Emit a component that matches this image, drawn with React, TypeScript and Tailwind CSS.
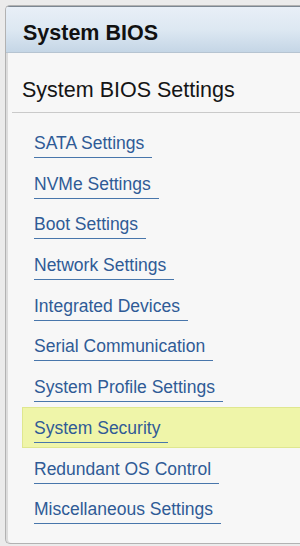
const items = [
  "SATA Settings",
  "NVMe Settings",
  "Boot Settings",
  "Network Settings",
  "Integrated Devices",
  "Serial Communication",
  "System Profile Settings",
  "System Security",
  "Redundant OS Control",
  "Miscellaneous Settings",
];

const App = () => {
  return (
    <div
      className="w-[300px] h-[546px] bg-[#ebebeb] pt-[5px] pl-[5px] pb-[2px] overflow-hidden"
      style={{ fontFamily: '"Liberation Sans", Arial, sans-serif' }}
    >
      <div className="h-full flex flex-col bg-[#f7f7f7] border border-r-0 border-[#b2b2b2] rounded-l-[5px] overflow-hidden shadow-[inset_2px_0_0_#dcdcdc]">
        {/* Header */}
        <div className="h-[47px] shrink-0 border-t border-t-[#7c8792] border-b border-b-[#b6c4d1] bg-gradient-to-b from-[#e8eff7] via-[#dde8f2] to-[#c5d6e6] pl-[17px] pt-[13px]">
          <h1 className="text-[21.5px] leading-[26px] font-bold text-[#111]">System BIOS</h1>
        </div>

        {/* Body */}
        <div className="flex-1">
          <h2 className="pl-[16px] pt-[24px] text-[21.5px] leading-[26px] text-[#151515]">
            System BIOS Settings
          </h2>
          <div className="ml-[6px] mt-[9px] h-px bg-[#cacaca]" />

          <ul className="pt-[9px]">
            {items.map((label) => {
              const active = label === "System Security";
              return (
                <li
                  key={label}
                  className={
                    active
                      ? "h-[40.7px] ml-[16px] pl-[11px] pt-[9px] border border-r-0 border-[#dfe78f] bg-[#eff5a9]"
                      : "h-[40.7px] ml-[16px] pl-[11px] pt-[9px] border border-r-0 border-transparent"
                  }
                >
                  <a
                    href="#"
                    className="inline-block pr-[8px] pb-[3px] text-[17.5px] leading-[22px] text-[#2f5b96] border-b border-[#4876ab]"
                  >
                    {label}
                  </a>
                </li>
              );
            })}
          </ul>
        </div>
      </div>
    </div>
  );
};

export default App;
